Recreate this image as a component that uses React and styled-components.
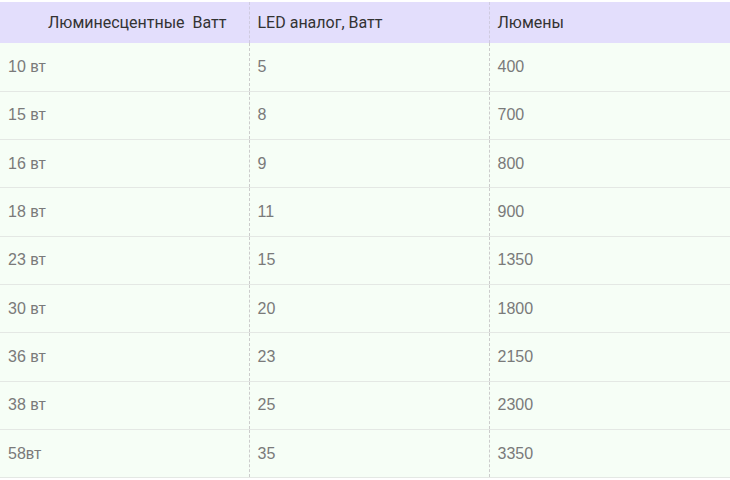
import styled, { createGlobalStyle } from 'styled-components';

const rows = [
    ['10 вт', '5', '400'],
    ['15 вт', '8', '700'],
    ['16 вт', '9', '800'],
    ['18 вт', '11', '900'],
    ['23 вт', '15', '1350'],
    ['30 вт', '20', '1800'],
    ['36 вт', '23', '2150'],
    ['38 вт', '25', '2300'],
    ['58вт', '35', '3350'],
];

const App = () => {
    return (
        <>
            <GlobalStyle />
            <Wrapper>
                <Table>
                    <colgroup>
                        <col style={{ width: 249 }} />
                        <col style={{ width: 240 }} />
                        <col />
                    </colgroup>
                    <thead>
                        <tr>
                            <HeadCell $first>Люминесцентные&nbsp; Ватт</HeadCell>
                            <HeadCell>LED аналог, Ватт</HeadCell>
                            <HeadCell>Люмены</HeadCell>
                        </tr>
                    </thead>
                    <tbody>
                        {rows.map((r) => (
                            <Row key={r[0]}>
                                <Cell>{r[0]}</Cell>
                                <Cell>{r[1]}</Cell>
                                <Cell>{r[2]}</Cell>
                            </Row>
                        ))}
                    </tbody>
                </Table>
            </Wrapper>
        </>
    );
};

// 스타일링
const GlobalStyle = createGlobalStyle`
  body {
    margin: 0;
    background: #ffffff;
    font-family: Roboto, "Liberation Sans", Arial, sans-serif;
  }
`;
const Wrapper = styled.div`
  width: 730px;
  height: 480px;
  padding-top: 2px;
  box-sizing: border-box;
  overflow: hidden;
`;
const Table = styled.table`
  width: 730px;
  border-collapse: collapse;
  table-layout: fixed;
`;
const HeadCell = styled.th`
  height: 41px;
  padding: 0 0 0 ${(p) => (p.$first ? '48px' : '8px')};
  background: #e3defc;
  color: #333333;
  font-family: Roboto, "Liberation Sans", sans-serif;
  font-size: 16px;
  font-weight: 400;
  text-align: left;
  white-space: nowrap;
  border-left: 1px dashed #cfcbe0;
  &:first-child {
    border-left: none;
  }
`;
const Row = styled.tr`
  height: 48.3px;
  background: #f6fef6;
  border-bottom: 1px solid #e4e8e4;
`;
const Cell = styled.td`
  padding: 0 0 0 8px;
  color: #7a7a7a;
  font-family: "Liberation Sans", Arial, sans-serif;
  font-size: 16px;
  border-left: 1px dashed #cccccc;
  &:first-child {
    border-left: none;
  }
`;

export default App;
